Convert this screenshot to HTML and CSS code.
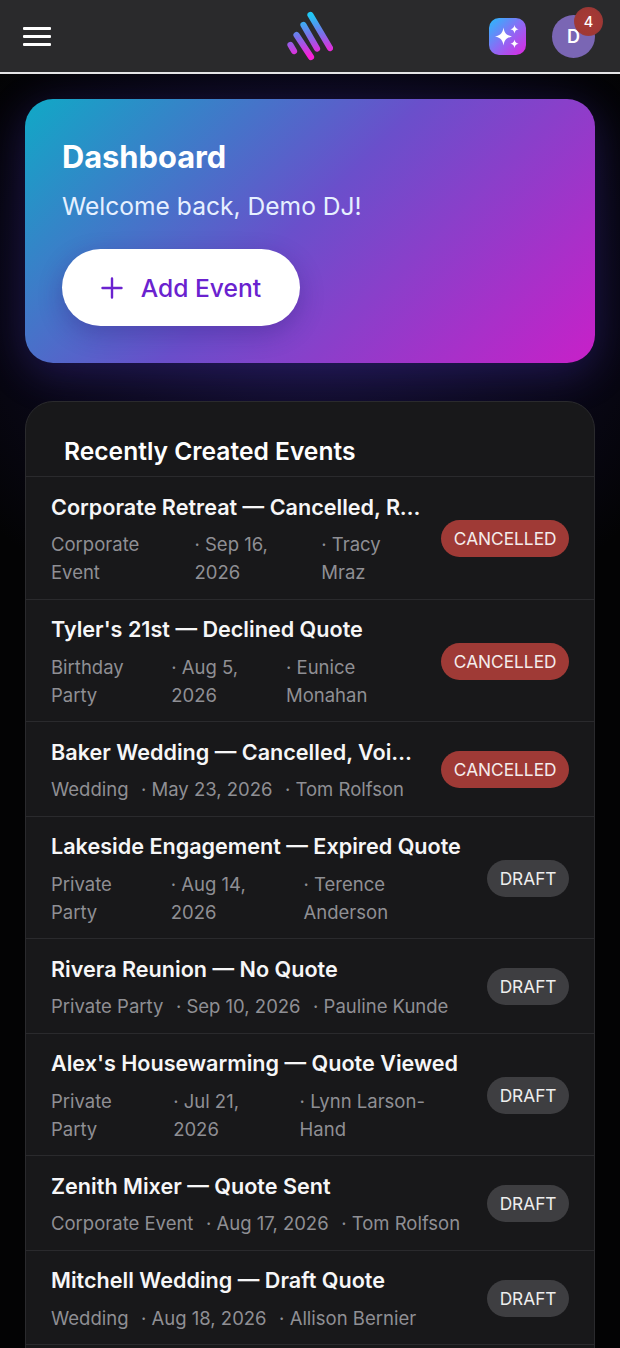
FILE: index.html
```html
<!DOCTYPE html>
<html lang="en">
<head>
<meta charset="utf-8">
<title>Dashboard</title>
<link rel="stylesheet" href="styles.css">
</head>
<body>
<header class="topbar">
  <button class="menu" aria-label="Menu"><span></span><span></span><span></span></button>
  <svg class="logo" width="48" height="52" viewBox="0 0 48 52" aria-label="Logo">
    <defs>
      <linearGradient id="lg" gradientUnits="userSpaceOnUse" x1="26" y1="4" x2="32" y2="44">
        <stop offset="0" stop-color="#20c8f5"/>
        <stop offset="0.5" stop-color="#7a70ea"/>
        <stop offset="1" stop-color="#f81fd8"/>
      </linearGradient>
    </defs>
    <g fill="none" stroke="url(#lg)" stroke-width="6.2" stroke-linecap="round">
      <path d="M5.5 34 L9 40"/>
      <path d="M11.5 24 L26 46"/>
      <path d="M18.5 14 L32 37.5"/>
      <path d="M25.5 4 L45 37"/>
    </g>
  </svg>
  <div class="actions">
    <button class="spark" aria-label="Assistant">
      <svg width="37" height="37" viewBox="0 0 37 37">
        <path fill="#fff" d="M14.5 9.5 C15.5 15 17 17 23 18.5 C17 20 15.5 22 14.5 27.5 C13.5 22 12 20 6 18.5 C12 17 13.5 15 14.5 9.5Z"/>
        <path fill="#fff" d="M25.5 7 C26 9.6 27 10.6 29.6 11.2 C27 11.8 26 12.8 25.5 15.4 C25 12.8 24 11.8 21.4 11.2 C24 10.6 25 9.6 25.5 7Z"/>
        <path fill="#fff" d="M25.5 21.6 C26 24.2 27 25.2 29.6 25.8 C27 26.4 26 27.4 25.5 30 C25 27.4 24 26.4 21.4 25.8 C24 25.2 25 24.2 25.5 21.6Z"/>
      </svg>
    </button>
    <div class="avatar">D<span class="count">4</span></div>
  </div>
</header>

<main class="page">
  <section class="hero">
    <h1>Dashboard</h1>
    <p>Welcome back, Demo DJ!</p>
    <button class="add">
      <svg width="22" height="22" viewBox="0 0 22 22" fill="none" stroke="#6a22cf" stroke-width="2.4" stroke-linecap="round"><path d="M11 1.5V20.5M1.5 11H20.5"/></svg>
      <span>Add Event</span>
    </button>
  </section>

  <section class="events">
    <h2>Recently Created Events</h2>
    <ul class="list">
      <li class="row">
        <div class="info"><div class="name">Corporate Retreat — Cancelled, Refunded</div>
          <div class="meta"><span>Corporate Event</span><span>· Sep 16, 2026</span><span>· Tracy Mraz</span></div></div>
        <span class="status cancelled">CANCELLED</span>
      </li>
      <li class="row">
        <div class="info"><div class="name">Tyler's 21st — Declined Quote</div>
          <div class="meta"><span>Birthday Party</span><span>· Aug 5, 2026</span><span>· Eunice Monahan</span></div></div>
        <span class="status cancelled">CANCELLED</span>
      </li>
      <li class="row">
        <div class="info"><div class="name">Baker Wedding — Cancelled, Voided</div>
          <div class="meta"><span>Wedding</span><span>· May 23, 2026</span><span>· Tom Rolfson</span></div></div>
        <span class="status cancelled">CANCELLED</span>
      </li>
      <li class="row">
        <div class="info"><div class="name">Lakeside Engagement — Expired Quote</div>
          <div class="meta"><span>Private Party</span><span>· Aug 14, 2026</span><span>· Terence Anderson</span></div></div>
        <span class="status draft">DRAFT</span>
      </li>
      <li class="row">
        <div class="info"><div class="name">Rivera Reunion — No Quote</div>
          <div class="meta"><span>Private Party</span><span>· Sep 10, 2026</span><span>· Pauline Kunde</span></div></div>
        <span class="status draft">DRAFT</span>
      </li>
      <li class="row">
        <div class="info"><div class="name">Alex's Housewarming — Quote Viewed</div>
          <div class="meta"><span>Private Party</span><span>· Jul 21, 2026</span><span>· Lynn Larson-Hand</span></div></div>
        <span class="status draft">DRAFT</span>
      </li>
      <li class="row">
        <div class="info"><div class="name">Zenith Mixer — Quote Sent</div>
          <div class="meta"><span>Corporate Event</span><span>· Aug 17, 2026</span><span>· Tom Rolfson</span></div></div>
        <span class="status draft">DRAFT</span>
      </li>
      <li class="row">
        <div class="info"><div class="name">Mitchell Wedding — Draft Quote</div>
          <div class="meta"><span>Wedding</span><span>· Aug 18, 2026</span><span>· Allison Bernier</span></div></div>
        <span class="status draft">DRAFT</span>
      </li>
    </ul>
  </section>
</main>
</body>
</html>
```

FILE: styles.css
```css
* { box-sizing: border-box; }
html, body { height: 100%; }
body {
  margin: 0;
  height: 1348px;
  overflow: hidden;
  background: #030304;
  color: #fff;
  font-family: Inter, "Liberation Sans", sans-serif;
}
button { font-family: inherit; border: 0; padding: 0; cursor: pointer; }

.topbar {
  height: 74px;
  background: #2a2a2c;
  border-bottom: 2px solid #e4e4e6;
  display: flex;
  align-items: center;
  justify-content: space-between;
  padding: 0 25px 0 23px;
  position: relative;
}
.menu {
  width: 28px;
  display: flex;
  flex-direction: column;
  gap: 5px;
  background: none;
  margin-top: 1px;
}
.menu span { display: block; height: 3px; background: #fff; border-radius: 1px; }
.logo { position: absolute; left: 285px; top: 11px; }
.actions { display: flex; align-items: center; gap: 26px; }
.spark {
  width: 37px;
  height: 37px;
  border-radius: 10px;
  background: linear-gradient(135deg, #25bdfd 0%, #8a6cf5 50%, #e025e0 100%);
  display: block;
}
.spark svg { display: block; }
.avatar {
  width: 43px;
  height: 43px;
  border-radius: 50%;
  background: #7a66b4;
  display: flex;
  align-items: center;
  justify-content: center;
  font-size: 18px;
  font-weight: 600;
  position: relative;
}
.count {
  position: absolute;
  top: -8px;
  right: -8px;
  width: 29px;
  height: 29px;
  border-radius: 50%;
  background: radial-gradient(circle, #a83a36 0%, #a03834 62%, rgba(140, 60, 70, .75) 100%);
  display: flex;
  align-items: center;
  justify-content: center;
  font-size: 14.5px;
  font-weight: 500;
}

.page {
  padding: 25px 25px 0;
  background:
    radial-gradient(ellipse 420px 340px at 310px 230px, rgba(70, 50, 190, .30), rgba(40, 30, 120, .12) 75%, transparent 100%);
  background-repeat: no-repeat;
}
.hero {
  height: 264px;
  border-radius: 28px;
  padding: 40px 37px 0;
  background: linear-gradient(135deg, #10a9c6 0%, #6a4fcb 48%, #c820c8 100%);
  box-shadow: 0 10px 40px rgba(76, 52, 190, .32);
}
.hero h1 { margin: 0; font-size: 30.8px; line-height: 36px; font-weight: 700; }
.hero p { margin: 16px 0 0; font-size: 24.6px; line-height: 30px; color: #e6f0ff; }
.add {
  margin-top: 28px;
  width: 238px;
  height: 77px;
  border-radius: 39px;
  background: #fff;
  color: #6a22cf;
  font-size: 24.6px;
  font-weight: 500;
  display: flex;
  align-items: center;
  justify-content: center;
  gap: 18px;
  box-shadow: 0 8px 24px rgba(40, 20, 110, .3);
}

.events {
  margin-top: 38px;
  background: #18181a;
  border: 1px solid #2a2a2d;
  border-radius: 28px 28px 0 0;
  height: 1000px;
}
.events h2 {
  margin: 0;
  padding: 32px 38px 7px;
  height: 75px;
  font-size: 24.6px;
  line-height: 34px;
  font-weight: 600;
  border-bottom: 1px solid #2a2a2d;
}
.list { list-style: none; margin: 0; padding: 0; }
.row {
  display: flex;
  align-items: center;
  gap: 20px;
  padding: 14.5px 25px 12.5px;
  border-bottom: 1px solid #2a2a2d;
}
.info { flex: 1; min-width: 0; }
.name {
  font-size: 21.6px;
  line-height: 31.5px;
  font-weight: 600;
  white-space: nowrap;
  overflow: hidden;
  text-overflow: ellipsis;
  color: #f6f6f7;
}
.meta {
  display: flex;
  gap: 12.5px;
  margin-top: 7px;
  font-size: 18.5px;
  line-height: 28px;
  color: #8f8f94;
}
.status {
  flex: none;
  height: 37px;
  padding: 0 12.5px;
  border-radius: 19px;
  display: flex;
  align-items: center;
  font-size: 17.3px;
  font-weight: 400;
  color: #f4ecec;
}
.cancelled { background: #9f3a36; }
.draft { background: #3e3e41; color: #eee; }
```
